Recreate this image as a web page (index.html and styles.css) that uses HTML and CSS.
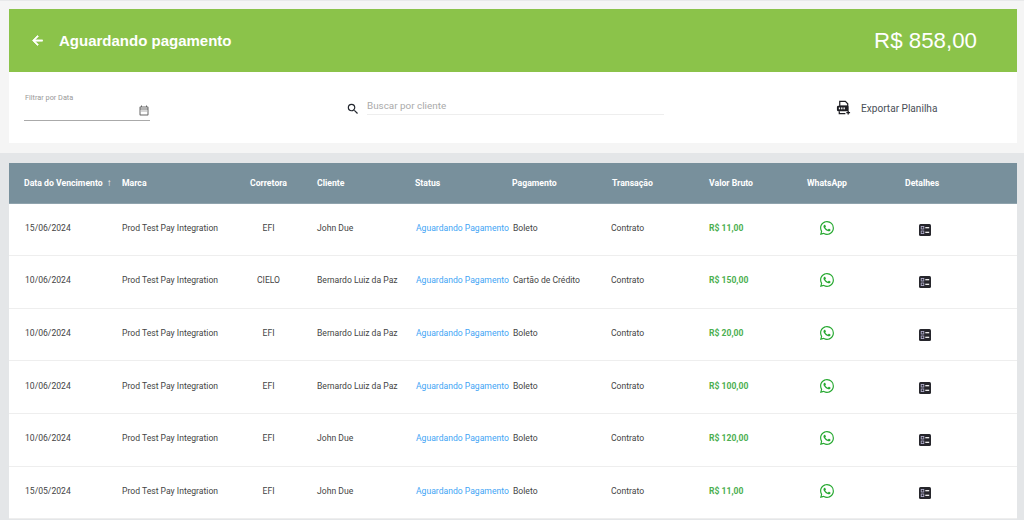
FILE: index.html
```html
<!DOCTYPE html>
<html lang="pt-BR">
  <head>
    <meta charset="UTF-8" />
    <meta name="viewport" content="width=device-width, initial-scale=1.0" />
    <title>Aguardando pagamento</title>
    <link rel="stylesheet" href="styles.css">
  </head>
  <body>
    <svg class="sprites" width="0" height="0">
      <symbol id="wa" viewBox="0 0 16 16">
        <path d="M13.601 2.326A7.854 7.854 0 0 0 7.994 0C3.627 0 .068 3.558.064 7.926c0 1.399.366 2.76 1.057 3.965L0 16l4.204-1.102a7.933 7.933 0 0 0 3.79.965h.004c4.368 0 7.926-3.558 7.93-7.93A7.898 7.898 0 0 0 13.6 2.326zM7.994 14.521a6.573 6.573 0 0 1-3.356-.92l-.24-.144-2.494.654.666-2.433-.156-.251a6.56 6.56 0 0 1-1.007-3.505c0-3.626 2.957-6.584 6.591-6.584a6.56 6.56 0 0 1 4.66 1.931 6.557 6.557 0 0 1 1.928 4.66c-.004 3.639-2.961 6.592-6.592 6.592zm3.615-4.934c-.197-.099-1.17-.578-1.353-.646-.182-.065-.315-.099-.445.099-.133.197-.513.646-.627.775-.114.133-.232.148-.43.05-.197-.1-.836-.308-1.592-.985-.59-.525-.985-1.175-1.103-1.372-.114-.198-.011-.304.088-.403.087-.088.197-.232.296-.346.1-.114.133-.198.198-.33.065-.134.034-.248-.015-.347-.05-.099-.445-1.076-.612-1.47-.16-.389-.323-.335-.445-.34-.114-.007-.247-.007-.38-.007a.729.729 0 0 0-.529.247c-.182.198-.691.677-.691 1.654 0 .977.71 1.916.81 2.049.098.133 1.394 2.132 3.383 2.992.47.205.84.326 1.129.418.475.152.904.129 1.246.08.38-.058 1.171-.48 1.338-.943.164-.464.164-.86.114-.943-.049-.084-.182-.133-.38-.232z"/>
      </symbol>
      <symbol id="details" viewBox="0 0 12 12">
        <rect width="12" height="12" rx="1.5" fill="#26262c"/>
        <rect x="2.2" y="2.4" width="2.6" height="2.6" fill="none" stroke="#b9b6d6" stroke-width=".8"/>
        <rect x="2.2" y="7" width="2.6" height="2.6" fill="none" stroke="#b9b6d6" stroke-width=".8"/>
        <rect x="6.3" y="3.1" width="3.9" height="1.2" fill="#fff"/>
        <rect x="6.3" y="7.7" width="3.9" height="1.2" fill="#fff"/>
      </symbol>
    </svg>

    <div class="page">
      <header class="topbar">
        <div class="topbar-left">
          <svg class="back" viewBox="0 0 24 24"><path d="M20 11H7.83l5.59-5.59L12 4l-8 8 8 8 1.41-1.41L7.83 13H20v-2z"/></svg>
          <h1>Aguardando pagamento</h1>
        </div>
        <div class="total">R$ 858,00</div>
      </header>

      <section class="filters">
        <div class="date-field">
          <label>Filtrar por Data</label>
          <div class="date-input">
            <svg viewBox="0 0 24 24"><path d="M19 3h-1V1h-2v2H8V1H6v2H5c-1.1 0-2 .9-2 2v14c0 1.1.9 2 2 2h14c1.1 0 2-.9 2-2V5c0-1.1-.9-2-2-2zm0 16H5V9h14v10zM5 7V5h14v2H5zm2 4h2v2H7v-2zm4 0h2v2h-2v-2zm4 0h2v2h-2v-2z"/></svg>
          </div>
        </div>
        <div class="search">
          <svg viewBox="0 0 24 24"><path d="M15.5 14h-.79l-.28-.27A6.47 6.47 0 0 0 16 9.5 6.5 6.5 0 1 0 9.5 16c1.61 0 3.09-.59 4.23-1.57l.27.28v.79l5 4.99L20.49 19l-4.99-5zm-6 0C7.01 14 5 11.99 5 9.5S7.01 5 9.5 5 14 7.01 14 9.5 11.99 14 9.5 14z"/></svg>
          <div class="search-input">Buscar por cliente</div>
        </div>
        <div class="export">
          <svg viewBox="0 0 16 16">
            <path d="M4 1h6l2.5 2.5V6H4z" fill="none" stroke="#1d1d22" stroke-width="1.3"/>
            <rect x="1" y="5.5" width="12.5" height="6" rx="1.5" fill="#1d1d22"/>
            <rect x="3" y="7.4" width="1.4" height="2" fill="#fff"/>
            <rect x="5.5" y="7.4" width="1.4" height="2" fill="#fff"/>
            <rect x="8" y="7.4" width="1.4" height="2" fill="#fff"/>
            <path d="M3.5 11.5V14h6.5" fill="none" stroke="#1d1d22" stroke-width="1.3"/>
            <path d="M13 11v4M11 13h4" stroke="#1d1d22" stroke-width="1.4"/>
          </svg>
          <span>Exportar Planilha</span>
        </div>
      </section>

      <div class="gap"></div>

      <table class="payments">
        <colgroup>
          <col class="c-date"><col class="c-brand"><col class="c-broker"><col class="c-client"><col class="c-status">
          <col class="c-pay"><col class="c-trans"><col class="c-value"><col class="c-wa"><col>
        </colgroup>
        <thead>
          <tr>
            <th class="date">Data do Vencimento <span class="sort">↑</span></th>
            <th>Marca</th>
            <th class="broker">Corretora</th>
            <th>Cliente</th>
            <th>Status</th>
            <th>Pagamento</th>
            <th>Transação</th>
            <th>Valor Bruto</th>
            <th>WhatsApp</th>
            <th>Detalhes</th>
          </tr>
        </thead>
        <tbody>
          <tr>
            <td class="date">15/06/2024</td><td>Prod Test Pay Integration</td><td class="broker">EFI</td><td>John Due</td>
            <td class="status">Aguardando Pagamento</td><td class="pay">Boleto</td><td class="trans">Contrato</td><td class="value">R$ 11,00</td>
            <td class="wa"><svg><use href="#wa"/></svg></td><td class="more"><svg><use href="#details"/></svg></td>
          </tr>
          <tr>
            <td class="date">10/06/2024</td><td>Prod Test Pay Integration</td><td class="broker">CIELO</td><td>Bernardo Luiz da Paz</td>
            <td class="status">Aguardando Pagamento</td><td class="pay">Cartão de Crédito</td><td class="trans">Contrato</td><td class="value">R$ 150,00</td>
            <td class="wa"><svg><use href="#wa"/></svg></td><td class="more"><svg><use href="#details"/></svg></td>
          </tr>
          <tr>
            <td class="date">10/06/2024</td><td>Prod Test Pay Integration</td><td class="broker">EFI</td><td>Bernardo Luiz da Paz</td>
            <td class="status">Aguardando Pagamento</td><td class="pay">Boleto</td><td class="trans">Contrato</td><td class="value">R$ 20,00</td>
            <td class="wa"><svg><use href="#wa"/></svg></td><td class="more"><svg><use href="#details"/></svg></td>
          </tr>
          <tr>
            <td class="date">10/06/2024</td><td>Prod Test Pay Integration</td><td class="broker">EFI</td><td>Bernardo Luiz da Paz</td>
            <td class="status">Aguardando Pagamento</td><td class="pay">Boleto</td><td class="trans">Contrato</td><td class="value">R$ 100,00</td>
            <td class="wa"><svg><use href="#wa"/></svg></td><td class="more"><svg><use href="#details"/></svg></td>
          </tr>
          <tr>
            <td class="date">10/06/2024</td><td>Prod Test Pay Integration</td><td class="broker">EFI</td><td>John Due</td>
            <td class="status">Aguardando Pagamento</td><td class="pay">Boleto</td><td class="trans">Contrato</td><td class="value">R$ 120,00</td>
            <td class="wa"><svg><use href="#wa"/></svg></td><td class="more"><svg><use href="#details"/></svg></td>
          </tr>
          <tr>
            <td class="date">15/05/2024</td><td>Prod Test Pay Integration</td><td class="broker">EFI</td><td>John Due</td>
            <td class="status">Aguardando Pagamento</td><td class="pay">Boleto</td><td class="trans">Contrato</td><td class="value">R$ 11,00</td>
            <td class="wa"><svg><use href="#wa"/></svg></td><td class="more"><svg><use href="#details"/></svg></td>
          </tr>
        </tbody>
      </table>
    </div>
  </body>
</html>
```

FILE: styles.css
```css
* {
  margin: 0;
  padding: 0;
  box-sizing: border-box;
}
html,
body {
  height: 520px;
  overflow: hidden;
}
body {
  background: linear-gradient(#f5f5f5 153px, #e4e6e8 153px);
  border-top: 1px solid #e8e9ea;
  font-family: Roboto, "Liberation Sans", sans-serif;
  color: #444;
}
.sprites {
  display: block;
}
.page {
  padding: 8px 7px 0 9px;
}

/* barra verde */
.topbar {
  height: 63px;
  background: #8bc34a;
  color: #fff;
  display: flex;
  align-items: center;
  justify-content: space-between;
  padding: 0 40px 0 21px;
}
.topbar-left {
  display: flex;
  align-items: center;
  gap: 14px;
}
.back {
  width: 15px;
  height: 15px;
  fill: #fff;
  stroke: #fff;
  stroke-width: 1.2;
}
.topbar h1 {
  font-family: "Liberation Sans", sans-serif;
  font-size: 15px;
  font-weight: bold;
}
.total {
  font-family: "Liberation Sans", sans-serif;
  font-size: 22.3px;
}

/* filtros */
.filters {
  height: 71px;
  background: #fff;
  display: grid;
  grid-template-columns: 337px 490px 1fr;
}
.date-field {
  width: 126px;
  margin: 21px 0 0 15px;
  height: 28px;
  border-bottom: 1px solid #aaa;
  position: relative;
}
.date-field label {
  display: block;
  padding-left: 1px;
  font-size: 7.3px;
  line-height: 9px;
  color: #999;
}
.date-input {
  display: flex;
  justify-content: flex-end;
  margin-top: 3px;
}
.date-input svg {
  width: 12px;
  height: 12px;
  fill: #666;
}
.search {
  display: flex;
  align-items: flex-start;
  gap: 7px;
  margin-top: 29px;
}
.search svg {
  width: 14px;
  height: 14px;
  margin-top: 1px;
  fill: #22262e;
}
.search-input {
  width: 297px;
  height: 14px;
  border-bottom: 1px solid #eee;
  font-size: 9.9px;
  line-height: 9px;
  color: #aaa;
}
.export {
  display: flex;
  align-items: center;
  gap: 10px;
  height: 16px;
  margin-top: 28px;
  font-size: 10.1px;
  color: #4a4f57;
}
.export svg {
  width: 15px;
  height: 16px;
}
.gap {
  height: 20px;
}

/* tabela */
.payments {
  width: 1008px;
  table-layout: fixed;
  border-collapse: collapse;
  background: #fff;
  font-size: 8.6px;
}
.c-date { width: 113px; }
.c-brand { width: 128px; }
.c-broker { width: 67px; }
.c-client { width: 98px; }
.c-status { width: 97px; }
.c-pay { width: 100px; }
.c-trans { width: 97px; }
.c-value { width: 98px; }
.c-wa { width: 98px; }
.payments th {
  height: 40px;
  background: #78909c;
  color: #fff;
  font-size: 8.7px;
  font-weight: bold;
  text-align: left;
  white-space: nowrap;
  border-bottom: 1px solid #8fa3ad;
}
.payments td {
  height: 52.67px;
  padding-bottom: 3px;
  white-space: nowrap;
  border-bottom: 1px solid #eee;
  vertical-align: middle;
}
.payments .date {
  padding-left: 15px;
}
.payments td.date {
  padding-left: 16px;
}
.sort {
  font-size: 10px;
  margin-left: 2px;
}
.payments .broker {
  text-align: center;
  padding-right: 30px;
}
.status {
  color: #42a5f5;
  padding-left: 1px;
}
.pay {
  padding-left: 1px;
}
.trans {
  text-indent: -1px;
}
.value {
  color: #4caf50;
  font-weight: bold;
}
.wa svg {
  display: block;
  width: 14px;
  height: 14px;
  margin-left: 13px;
  fill: #25a82f;
}
.more svg {
  display: block;
  width: 12px;
  height: 12px;
  margin: 4px 0 0 14px;
}
```
